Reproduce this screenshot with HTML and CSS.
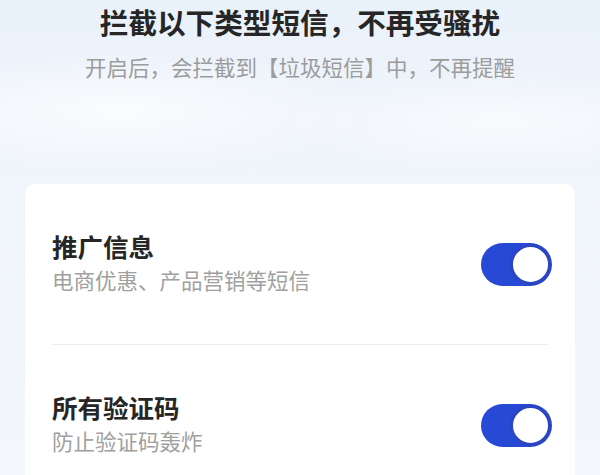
FILE: index.html
```html
<!DOCTYPE html>
<html lang="zh">
<head>
<meta charset="utf-8">
<link rel="stylesheet" href="styles.css">
</head>
<body>
<div class="page">
  <header class="intro">
    <h1 class="intro-title">拦截以下类型短信，不再受骚扰</h1>
    <p class="intro-sub">开启后，会拦截到【垃圾短信】中，不再提醒</p>
  </header>
  <section class="card">
    <div class="row">
      <div class="row-text">
        <div class="row-title">推广信息</div>
        <div class="row-sub">电商优惠、产品营销等短信</div>
      </div>
      <div class="switch"><span class="knob"></span></div>
    </div>
    <div class="divider"></div>
    <div class="row">
      <div class="row-text">
        <div class="row-title">所有验证码</div>
        <div class="row-sub">防止验证码轰炸</div>
      </div>
      <div class="switch"><span class="knob"></span></div>
    </div>
  </section>
</div>
</body>
</html>
```

FILE: styles.css
```css
html, body {
  margin: 0;
  padding: 0;
  overflow: hidden;
}
body {
  width: 600px;
  height: 475px;
  font-family: "Noto Sans CJK SC", "Noto Sans", sans-serif;
  background:
    radial-gradient(ellipse 260px 60px at 120px 110px, rgba(255,255,255,0.7), rgba(255,255,255,0)),
    radial-gradient(ellipse 220px 50px at 500px 120px, rgba(255,255,255,0.6), rgba(255,255,255,0)),
    linear-gradient(180deg, #e9f1fa 0%, #f0f5fb 30%, #f3f7fc 100%);
}
.page {
  height: 475px;
  overflow: hidden;
  display: flex;
  flex-direction: column;
  align-items: center;
}
.intro {
  display: flex;
  flex-direction: column;
  align-items: center;
  padding-top: 4px;
}
.intro-title {
  margin: 0;
  font-size: 28.6px;
  line-height: 36px;
  font-weight: 700;
  color: #262626;
}
.intro-sub {
  margin: 12px 0 0;
  font-size: 21.5px;
  line-height: 30px;
  color: #9c9c9c;
}
.card {
  margin-top: 102px;
  width: 550px;
  flex-shrink: 0;
  background: #ffffff;
  border-radius: 10px 10px 0 0;
  box-sizing: border-box;
}
.row {
  height: 160px;
  display: flex;
  align-items: center;
  justify-content: space-between;
  padding: 0 23px 0 27px;
}
.row-text {
  display: flex;
  flex-direction: column;
  gap: 2px;
  padding-bottom: 4px;
}
.row-title {
  font-size: 25.5px;
  line-height: 34px;
  font-weight: 700;
  color: #262626;
}
.row-sub {
  font-size: 21.5px;
  line-height: 30px;
  color: #a0a0a0;
}
.divider {
  height: 1px;
  margin: 0 27px;
  background: #ececec;
}
.switch {
  width: 71px;
  height: 43px;
  border-radius: 22px;
  background: #2848d6;
  display: flex;
  align-items: center;
  justify-content: flex-end;
  padding-right: 1px;
  box-sizing: border-box;
}
.knob {
  width: 41px;
  height: 41px;
  border-radius: 50%;
  background: #ffffff;
  border: 3px solid #2c45c2;
  box-sizing: border-box;
}
```
